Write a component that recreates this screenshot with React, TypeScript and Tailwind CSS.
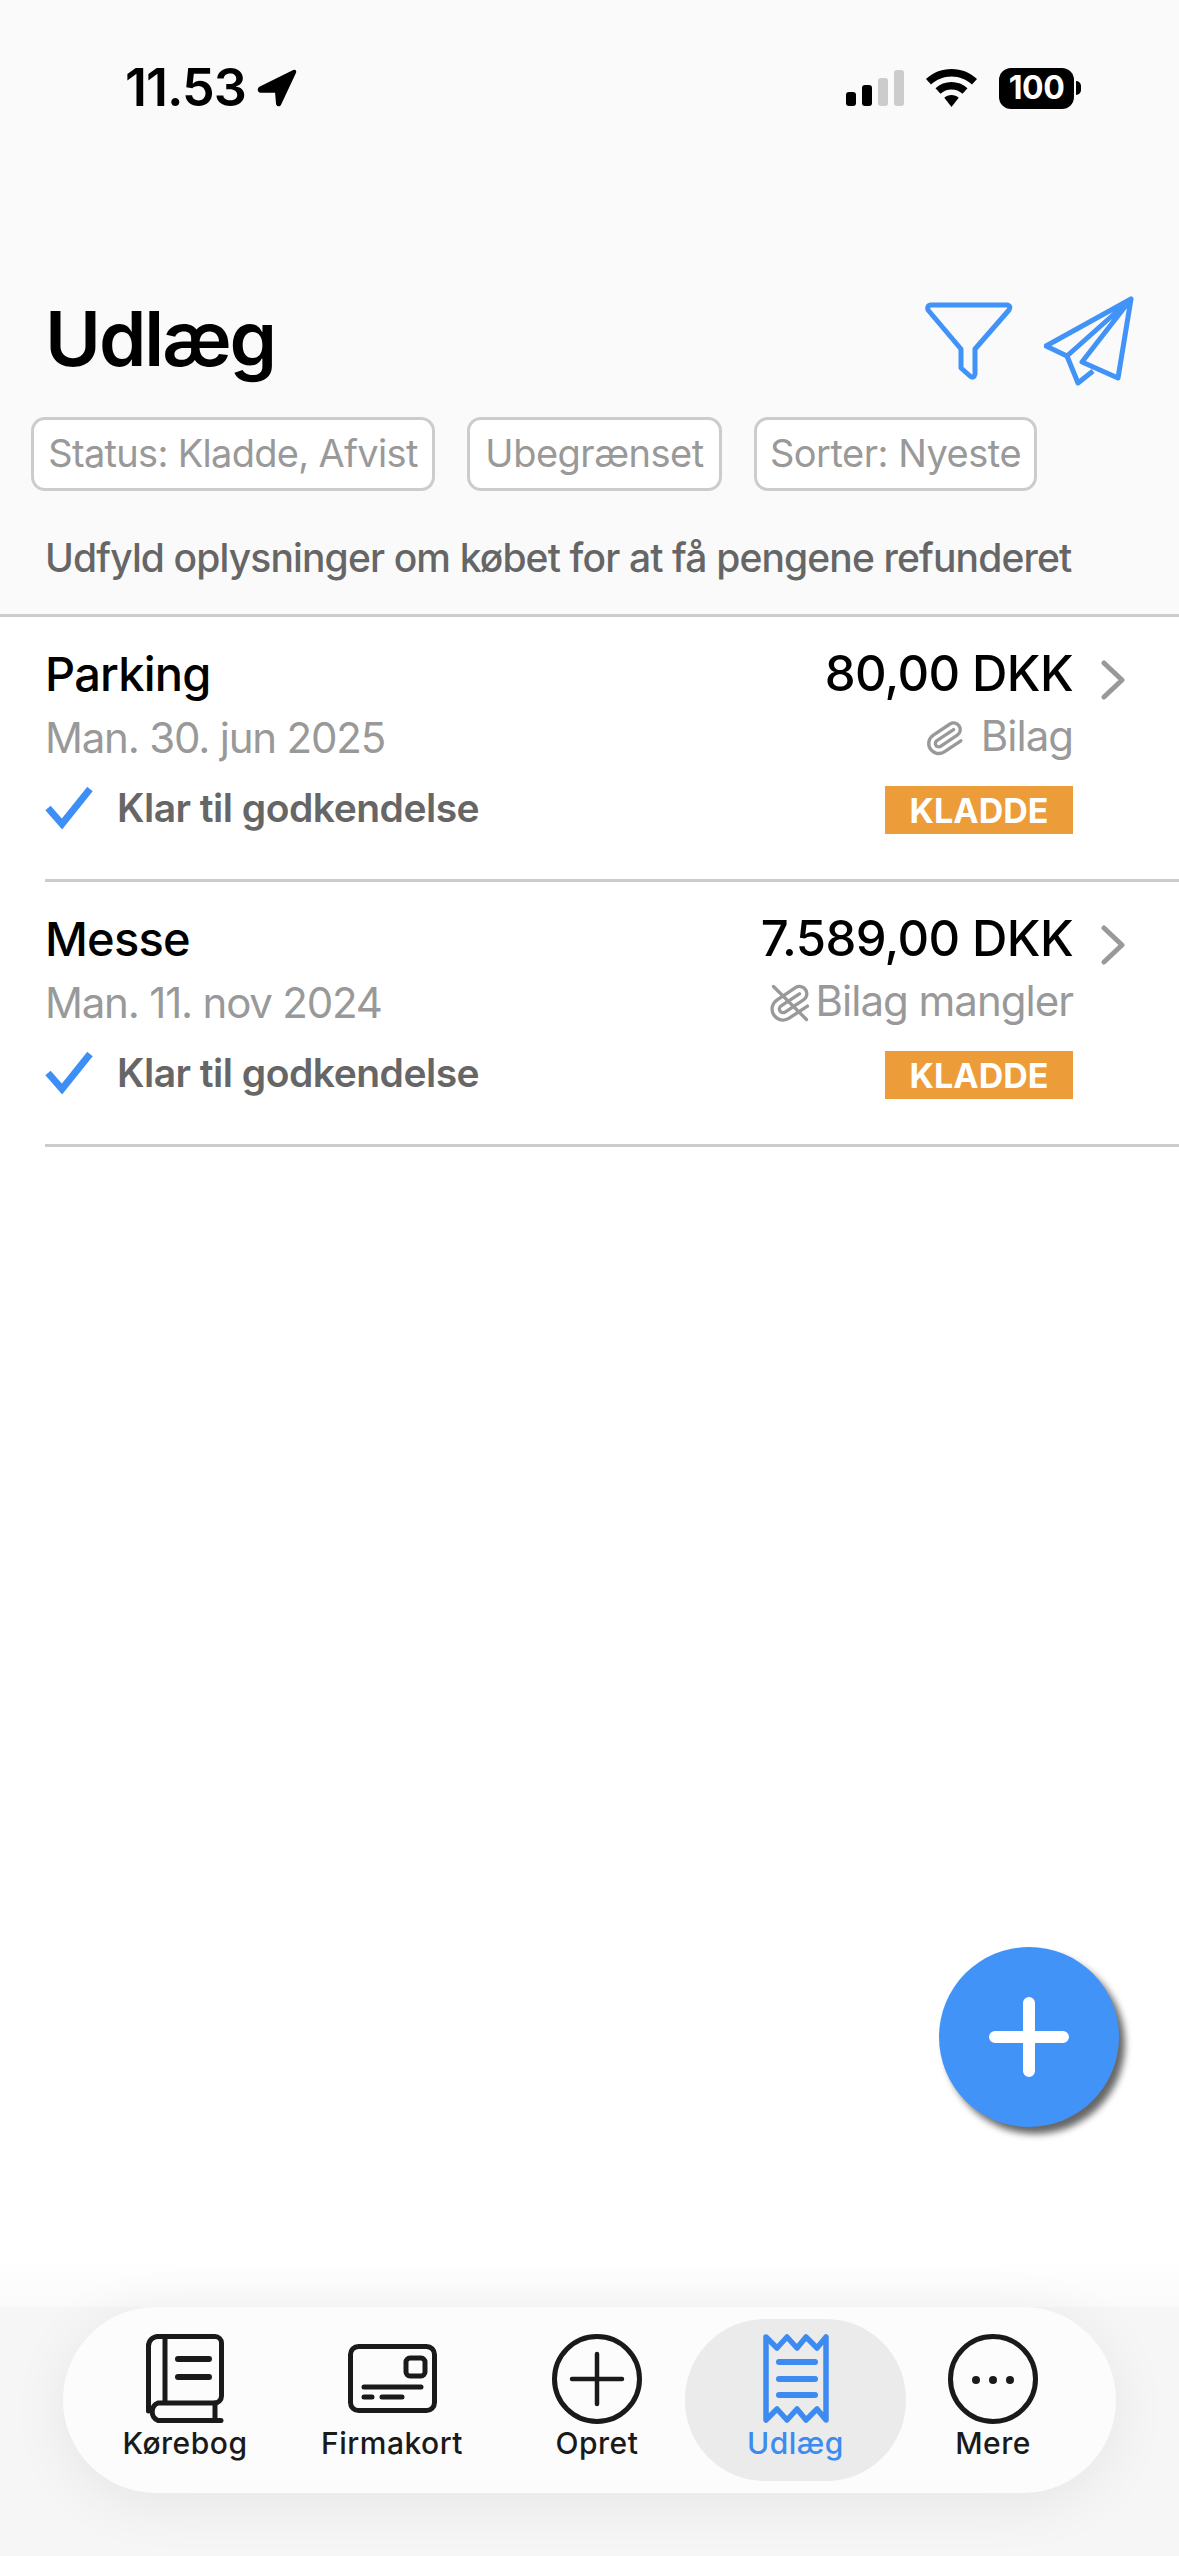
import React from 'react';

const font = { fontFamily: 'Inter, "Liberation Sans", sans-serif' };

const clipPath =
  'm16 6-8.414 8.586a2 2 0 0 0 2.829 2.829l8.414-8.586a4 4 0 1 0-5.657-5.657l-8.379 8.551a6 6 0 1 0 8.485 8.485l8.379-8.551';

const BookIcon = () => (
  <svg width="78" height="89" viewBox="0 0 78 89" fill="none" stroke="#1a1a1a" strokeWidth="5" strokeLinecap="round" strokeLinejoin="round">
    <path d="M12 2.500H69a6.500 6.500 0 0 1 6.500 6.500V62a7 7 0 0 1-7 7H12a9.500 9.500 0 0 0 0 17.500H75" />
    <path d="M12 2.500A9.500 9.500 0 0 0 2.500 12V77" />
    <path d="M19 3V68M69 69V86" />
    <path d="M32 25H63M32 43H63" strokeWidth="6" />
  </svg>
);

const CardIcon = () => (
  <svg width="89" height="69" viewBox="0 0 89 69" fill="none" stroke="#1a1a1a" strokeWidth="5" strokeLinecap="round" strokeLinejoin="round">
    <rect x="2.500" y="2.500" width="84" height="64" rx="8" />
    <rect x="58" y="14" width="19" height="18" rx="4" />
    <path d="M16 43H73M16 53H24M34 53H54" strokeWidth="5" />
  </svg>
);

const PlusCircleIcon = () => (
  <svg width="90" height="90" viewBox="0 0 90 90" fill="none" stroke="#1a1a1a" strokeLinecap="round">
    <circle cx="45" cy="45" r="42.500" strokeWidth="5" />
    <path d="M45 20V70M20 45H70" strokeWidth="4.500" />
  </svg>
);

const ReceiptIcon = () => (
  <svg width="66" height="89" viewBox="0 0 66 89" fill="none" stroke="#3d8bf0" strokeLinejoin="round" strokeLinecap="round">
    <path d="M3 3L14 14L24 3L34 14L43 3L54 14L63 3V86L54 75L43 86L34 75L24 86L14 75L3 86Z" strokeWidth="5.500" />
    <path d="M16 28H52M16 45H52M16 61H52" strokeWidth="6" />
  </svg>
);

const MoreIcon = () => (
  <svg width="90" height="90" viewBox="0 0 90 90" fill="none">
    <circle cx="45" cy="45" r="42.500" stroke="#1a1a1a" strokeWidth="5" />
    <circle cx="28" cy="46" r="4" fill="#1a1a1a" />
    <circle cx="45" cy="46" r="4" fill="#1a1a1a" />
    <circle cx="62" cy="46" r="4" fill="#1a1a1a" />
  </svg>
);

const CheckIcon = () => (
  <svg width="48" height="42" viewBox="0 0 48 42" fill="none" stroke="#3d8ff5" strokeWidth="7" strokeLinejoin="miter">
    <path d="M3 21L17 37L45 2" />
  </svg>
);

const Chevron = () => (
  <svg width="24" height="40" viewBox="0 0 24 40" fill="none" stroke="#999999" strokeWidth="5" strokeLinecap="round" strokeLinejoin="round">
    <path d="M3 3L21 20L3 37" />
  </svg>
);

const tabs = [
  { label: 'Kørebog', width: 'w-[180px]', icon: <BookIcon /> },
  { label: 'Firmakort', width: 'w-[234px]', icon: <CardIcon /> },
  { label: 'Opret', width: 'w-[176px]', icon: <PlusCircleIcon /> },
  { label: 'Udlæg', width: 'w-[221px]', icon: <ReceiptIcon />, active: true },
  { label: 'Mere', width: 'w-[174px]', icon: <MoreIcon /> },
];

const rows = [
  { title: 'Parking', date: 'Man. 30. jun 2025', amount: '80,00 DKK', attachment: 'Bilag', missing: false },
  { title: 'Messe', date: 'Man. 11. nov 2024', amount: '7.589,00 DKK', attachment: 'Bilag mangler', missing: true },
];

const pills = ['Status: Kladde, Afvist', 'Ubegrænset', 'Sorter: Nyeste'];

export default function App() {
  return (
    <div className="relative flex h-[2556px] w-[1179px] flex-col overflow-hidden bg-white" style={font}>
      {/* Header */}
      <div className="border-b-[3px] border-[#cccccc] bg-[#fafafa] pt-[58px] pb-[26px]">
        <div className="flex h-[60px] items-center justify-between pl-[125px] pr-[98px]">
          <div className="flex items-center gap-[11px]">
            <span className="text-[52px] font-semibold tracking-[-1px] text-black">11.53</span>
            <svg width="40" height="40" viewBox="0 0 42 40" fill="black">
              <path d="M38 1L2 19Q-1 23 3 25L19 25L20 37Q22 41 25 38L41 4Q42 0 38 1Z" />
            </svg>
          </div>
          <div className="flex items-center">
            <svg width="58" height="36" viewBox="0 0 58 36">
              <rect x="0" y="22" width="10" height="14" rx="3" fill="black" />
              <rect x="16" y="15" width="10" height="21" rx="3" fill="black" />
              <rect x="32" y="8" width="10" height="28" rx="3" fill="#cccccc" />
              <rect x="48" y="0" width="10" height="36" rx="3" fill="#cccccc" />
            </svg>
            <svg className="ml-[22px]" width="51" height="38" viewBox="0 0 51 38" fill="black">
              <path d="M25.500 0C15.500 0 7 3.500 0 10L5 15.500C10.500 10.500 17.500 7.500 25.500 7.500C33.500 7.500 40.500 10.500 46 15.500L51 10C44 3.500 35.500 0 25.500 0Z" />
              <path d="M25.500 13C19.500 13 14 15.200 9.500 19.200L14.500 24.700C17.500 22 21.300 20.500 25.500 20.500C29.700 20.500 33.500 22 36.500 24.700L41.500 19.200C37 15.200 31.500 13 25.500 13Z" />
              <path d="M25.500 26C22.800 26 20.300 27 18.300 28.700L25.500 38L32.700 28.700C30.700 27 28.200 26 25.500 26Z" />
            </svg>
            <div className="ml-[22px] flex h-[41px] w-[75px] items-center justify-center rounded-[12px] bg-black text-[32px] leading-none font-bold tracking-[-0.5px] text-white">
              100
            </div>
            <div className="ml-[2px] h-[14px] w-[5px] rounded-r-full bg-black" />
          </div>
        </div>

        <div className="mt-[170px] flex h-[100px] items-center justify-between pl-[45px] pr-[45px]">
          <h1 className="text-[76px] font-semibold tracking-[-2px] text-black">Udlæg</h1>
          <div className="flex items-center gap-[31px] pt-[5px]">
            <svg width="88" height="78" viewBox="0 0 88 78" fill="none" stroke="#4193f7" strokeWidth="5" strokeLinejoin="round">
              <path d="M5 3H83Q86 4 84 8L50 47V72Q49 77 45 74L36 66V47L3 8Q2 4 5 3Z" />
            </svg>
            <svg width="90" height="90" viewBox="0 0 90 90" fill="none" stroke="#4193f7" strokeWidth="5" strokeLinejoin="round">
              <path d="M87 3L2 50L23 60L87 3L74 82L38 66L87 3Z" />
              <path d="M23 60L34 87L49 75" />
            </svg>
          </div>
        </div>

        <div className="mt-[29px] flex gap-[32px] pl-[31px]">
          {pills.map((pill, i) => (
            <div
              key={pill}
              className={`flex h-[74px] items-center justify-center rounded-[14px] border-[3px] border-[#cccccc] bg-white pb-[2px] text-[38px] text-[#999999] ${
                i === 0 ? 'w-[404px] tracking-[-0.7px]' : i === 1 ? 'w-[255px] tracking-[-0.5px]' : 'w-[283px] tracking-[-0.5px]'
              }`}
            >
              {pill}
            </div>
          ))}
        </div>

        <p className="mt-[37px] flex h-[60px] items-center pl-[45px] text-[39px] font-medium tracking-[-0.87px] text-[#666666]">
          Udfyld oplysninger om købet for at få pengene refunderet
        </p>
      </div>

      {/* Expense rows */}
      <div className="flex-1">
        {rows.map((row) => (
          <div key={row.title} className="ml-[45px] flex h-[265px] items-start border-b-[3px] border-[#cccccc] pt-[25px]">
            <div className="flex-1">
              <div className="flex h-[64px] items-center text-[47px] font-medium tracking-[-0.8px] text-black">{row.title}</div>
              <div className="flex h-[64px] items-center pb-[2px] text-[42px] tracking-[-1.2px] text-[#999999]">{row.date}</div>
              <div className="mt-[6px] flex h-[64px] items-center">
                <CheckIcon />
                <span className="ml-[24px] text-[39px] font-semibold tracking-[-0.5px] text-[#666666]">Klar til godkendelse</span>
              </div>
            </div>
            <div className="flex flex-col items-end">
              <div className="flex h-[64px] items-center text-[49px] font-medium tracking-[-0.6px] text-black">{row.amount}</div>
              <div className="flex h-[64px] items-center pb-[6px] text-[42px] tracking-[-1px] text-[#999999]">
                {row.missing ? (
                  <svg className="mr-[4px] mt-[6px]" width="44" height="44" viewBox="0 0 24 24" fill="none" stroke="#999999" strokeWidth="1.800" strokeLinecap="round" strokeLinejoin="round">
                    <path d={clipPath} transform="rotate(12 12 12)" />
                    <path d="M3 3L21 21" />
                  </svg>
                ) : (
                  <svg className="mr-[16px] mt-[6px]" width="40" height="40" viewBox="0 0 24 24" fill="none" stroke="#999999" strokeWidth="2" strokeLinecap="round" strokeLinejoin="round">
                    <path d={clipPath} transform="rotate(12 12 12)" />
                  </svg>
                )}
                {row.attachment}
              </div>
              <div className="mt-[16px] flex h-[48px] w-[188px] items-center justify-center bg-[#ec9d3a] text-[34px] font-bold text-white">
                KLADDE
              </div>
            </div>
            <div className="mr-[54px] ml-[28px] flex h-[64px] items-center pt-[12px]">
              <Chevron />
            </div>
          </div>
        ))}
      </div>

      <div className="h-[47px] bg-gradient-to-b from-white to-[#fafafa]" />

      {/* Tab bar */}
      <div className="h-[249px] bg-[#f6f6f6]">
        <div className="ml-[63px] flex h-[186px] w-[1053px] items-start rounded-[93px] bg-[#fcfcfc] pl-[32px] pt-[12px] shadow-[0_10px_60px_rgba(0,0,0,0.07)]">
          {tabs.map((tab) => (
            <div
              key={tab.label}
              className={`flex h-[162px] flex-col items-center pt-[15px] ${tab.width} ${tab.active ? 'rounded-[80px] bg-[#ebebeb]' : ''}`}
            >
              <div className="flex h-[89px] items-center">{tab.icon}</div>
              <span className={`text-[30px] leading-[40px] font-medium tracking-[0.5px] ${tab.active ? 'text-[#3d8bf0]' : 'text-[#1a1a1a]'}`}>
                {tab.label}
              </span>
            </div>
          ))}
        </div>
      </div>

      {/* Floating add button */}
      <div className="absolute top-[1947px] left-[939px] flex h-[180px] w-[180px] items-center justify-center rounded-full bg-[#4193f7] shadow-[6px_7px_7px_rgba(0,0,0,0.6)]">
        <svg width="80" height="80" viewBox="0 0 80 80" stroke="white" strokeWidth="12" strokeLinecap="round">
          <path d="M40 6V74M6 40H74" />
        </svg>
      </div>
    </div>
  );
}
